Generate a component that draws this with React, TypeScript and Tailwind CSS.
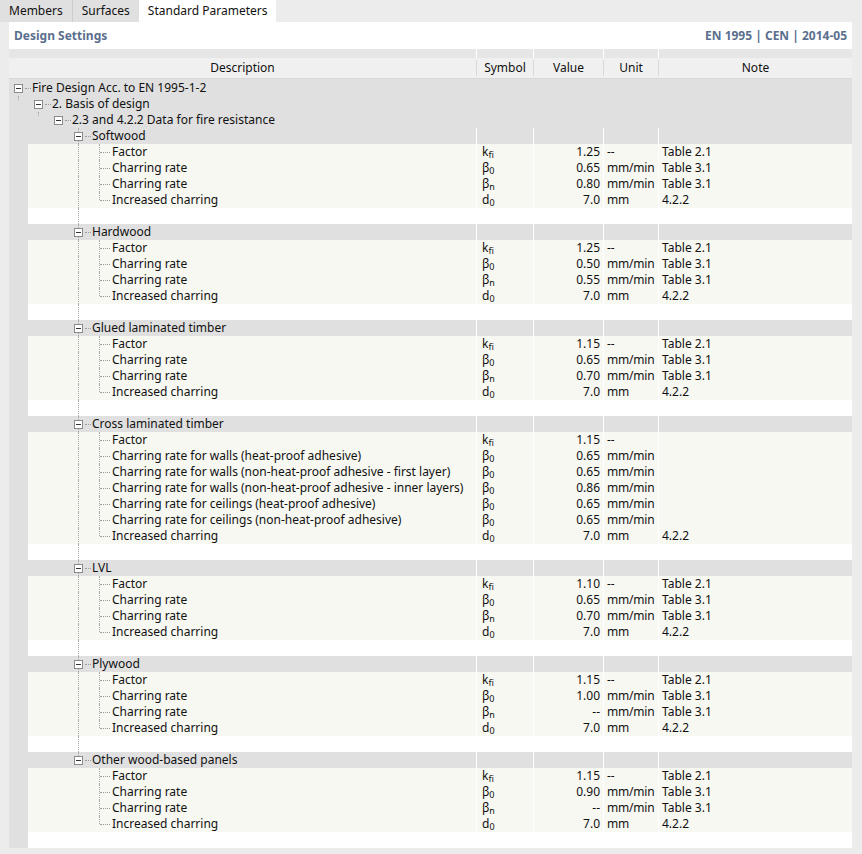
import React from "react";

type Item = { d: string; s: [string, string]; v: string; u: string; n: string };
const K: [string, string] = ["k", "fi"];
const B0: [string, string] = ["β", "0"];
const BN: [string, string] = ["β", "n"];
const D0: [string, string] = ["d", "0"];
const std = (v1: string, v2: string, v3: string, n2 = "Table 3.1", n3 = "Table 3.1"): Item[] => [
  { d: "Factor", s: K, v: v1, u: "--", n: "Table 2.1" },
  { d: "Charring rate", s: B0, v: v2, u: "mm/min", n: n2 },
  { d: "Charring rate", s: BN, v: v3, u: "mm/min", n: n3 },
  { d: "Increased charring", s: D0, v: "7.0", u: "mm", n: "4.2.2" },
];
const groups: { name: string; items: Item[] }[] = [
  { name: "Softwood", items: std("1.25", "0.65", "0.80") },
  { name: "Hardwood", items: std("1.25", "0.50", "0.55") },
  { name: "Glued laminated timber", items: std("1.15", "0.65", "0.70") },
  {
    name: "Cross laminated timber",
    items: [
      { d: "Factor", s: K, v: "1.15", u: "--", n: "" },
      { d: "Charring rate for walls (heat-proof adhesive)", s: B0, v: "0.65", u: "mm/min", n: "" },
      { d: "Charring rate for walls (non-heat-proof adhesive - first layer)", s: B0, v: "0.65", u: "mm/min", n: "" },
      { d: "Charring rate for walls (non-heat-proof adhesive - inner layers)", s: B0, v: "0.86", u: "mm/min", n: "" },
      { d: "Charring rate for ceilings (heat-proof adhesive)", s: B0, v: "0.65", u: "mm/min", n: "" },
      { d: "Charring rate for ceilings (non-heat-proof adhesive)", s: B0, v: "0.65", u: "mm/min", n: "" },
      { d: "Increased charring", s: D0, v: "7.0", u: "mm", n: "4.2.2" },
    ],
  },
  { name: "LVL", items: std("1.10", "0.65", "0.70") },
  { name: "Plywood", items: std("1.15", "1.00", "--") },
  { name: "Other wood-based panels", items: std("1.15", "0.90", "--") },
];

const Box = () => (
  <span className="inline-flex items-center justify-center w-[9px] h-[9px] border border-[#8a8a8a] bg-white mr-[1px]">
    <span className="block w-[5px] h-px bg-[#333]" />
  </span>
);
const HDots = ({ w }: { w: string }) => <span className={`inline-block ${w} border-t border-dotted border-[#999] mx-[1px]`} />;
const VLine = ({ left, top = "top-0", h = "h-full" }: { left: string; top?: string; h?: string }) => (
  <span className={`absolute ${left} ${top} ${h} border-l border-dotted border-[#aaa]`} />
);

const Cols = ({ it, bg }: { it?: Item; bg: string }) => (
  <>
    <div className={`w-[57px] shrink-0 pl-[5px] border-l border-white ${bg}`}>
      {it && (
        <span>
          {it.s[0]}
          <span className="text-[9px] relative top-[2px]">{it.s[1]}</span>
        </span>
      )}
    </div>
    <div className={`w-[70px] shrink-0 text-right pr-[3px] border-l border-white ${bg}`}>{it?.v}</div>
    <div className={`w-[55px] shrink-0 pl-[3px] border-l border-white tracking-[-0.2px] ${bg}`}>{it?.u}</div>
    <div className={`flex-1 pl-[3px] border-l border-white ${bg}`}>{it?.n}</div>
  </>
);

export default function App() {
  return (
    <div className="w-[862px] h-[854px] bg-[#ececec] text-[12px] leading-[16px] text-[#111]" style={{ fontFamily: '"Noto Sans", "Open Sans", sans-serif' }}>
      <div className="flex h-[22px] items-stretch">
        <div className="px-[9px] flex items-center bg-[#e0e0e0] border-r border-[#ccc]">Members</div>
        <div className="px-[9px] flex items-center bg-[#e0e0e0]">Surfaces</div>
        <div className="px-[9px] flex items-center bg-white">Standard Parameters</div>
      </div>
      <div className="ml-[9px] mr-[10px] bg-white">
        <div className="flex justify-between h-[27px] items-center px-[5px] font-bold text-[#5a6f8e]">
          <span>Design Settings</span>
          <span>EN 1995 | CEN | 2014-05</span>
        </div>
        <div className="flex h-[9px] bg-[#e6e6e6]">
          <div className="w-[467px]" />
          <div className="w-[57px] border-l border-white" />
          <div className="w-[70px] border-l border-white" />
          <div className="w-[55px] border-l border-white" />
          <div className="flex-1 border-l border-white" />
        </div>
        <div className="flex h-[21px] items-center bg-[#f0f0f0] border-b border-[#d8d8d8] text-center">
          <div className="w-[467px]">Description</div>
          <div className="w-[57px] border-l border-[#d8d8d8]">Symbol</div>
          <div className="w-[70px] border-l border-[#d8d8d8]">Value</div>
          <div className="w-[55px] border-l border-[#d8d8d8]">Unit</div>
          <div className="flex-1 border-l border-[#d8d8d8]">Note</div>
        </div>
        <div className="bg-[#e0e0e0] pt-[1px]">
          <div className="h-[16px] flex items-center pl-[5px] relative">
            <Box /><HDots w="w-[6px]" />Fire Design Acc. to EN 1995-1-2
          </div>
          <div className="h-[16px] flex items-center pl-[25px] relative">
            <VLine left="left-[9px]" h="h-[4px]" />
            <Box /><HDots w="w-[6px]" />2. Basis of design
          </div>
          <div className="h-[16px] flex items-center pl-[45px] relative">
            <VLine left="left-[29px]" h="h-[4px]" />
            <Box /><HDots w="w-[6px]" />2.3 and 4.2.2 Data for fire resistance
          </div>
        </div>
        {groups.map((g, gi) => {
          const last = gi === groups.length - 1;
          return (
            <div key={g.name}>
              <div className="h-[16px] flex bg-[#e0e0e0]">
                <div className="w-[467px] shrink-0 flex items-center pl-[65px] relative">
                  <VLine left="left-[69px]" h={last ? "h-[4px]" : "h-full"} />
                  <span className="relative bg-[#e0e0e0] flex items-center"><Box /></span>
                  <HDots w="w-[6px]" />
                  {g.name}
                </div>
                <Cols bg="bg-[#e0e0e0]" />
              </div>
              {g.items.map((it, i) => (
                <div key={i} className="h-[16px] flex">
                  <div className="w-[19px] shrink-0 bg-[#e0e0e0]" />
                  <div className="w-[448px] shrink-0 flex items-center pl-[71px] bg-[#f7f8f2] relative">
                    {!last && <VLine left="left-[50px]" />}
                    <VLine left="left-[71px]" h={i === g.items.length - 1 ? "h-[8px]" : "h-full"} />
                    <HDots w="w-[10px]" />
                    <span className="ml-[1px]">{it.d}</span>
                  </div>
                  <Cols it={it} bg="bg-[#f7f8f2]" />
                </div>
              ))}
              <div className="h-[16px] flex">
                <div className="w-[19px] shrink-0 bg-[#e0e0e0]" />
                <div className="flex-1 bg-white relative">{!last && <VLine left="left-[50px]" />}</div>
              </div>
            </div>
          );
        })}
      </div>
    </div>
  );
}
